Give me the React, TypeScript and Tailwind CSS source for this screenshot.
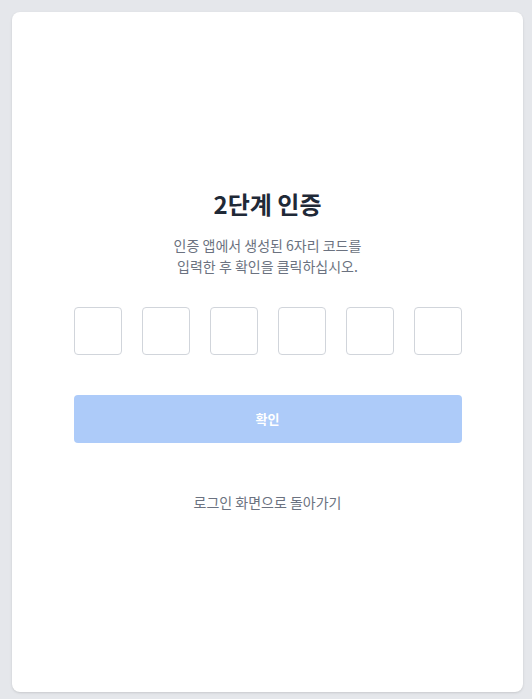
export default function App() {
  const digits = [0, 1, 2, 3, 4, 5];
  return (
    <div
      className="min-h-screen bg-[#e5e7eb] pt-3 pl-3 pr-[9px]"
      style={{ fontFamily: '"Noto Sans CJK KR", "Noto Sans", sans-serif' }}
    >
      <div className="flex h-[680px] w-full flex-col items-center justify-center rounded-lg bg-white pb-1 shadow-sm">
        <h1 className="text-[24px] font-bold leading-8 text-[#1f2937]">2단계 인증</h1>
        <p className="mt-[15px] text-center text-[14px] leading-[21px] text-[#6b7280]">
          인증 앱에서 생성된 6자리 코드를
          <br />
          입력한 후 확인을 클릭하십시오.
        </p>
        <div className="mt-[30px] flex gap-5">
          {digits.map((d) => (
            <input
              key={d}
              maxLength={1}
              className="h-12 w-12 rounded-[4px] border border-[#d1d5db] text-center text-lg outline-none"
            />
          ))}
        </div>
        <button className="mt-10 h-12 w-[388px] rounded-[4px] bg-[#adcbf9] text-[13px] font-bold text-white">
          확인
        </button>
        <a className="mt-[49px] text-[14px] leading-5 text-[#6b7280]">로그인 화면으로 돌아가기</a>
      </div>
    </div>
  );
}
